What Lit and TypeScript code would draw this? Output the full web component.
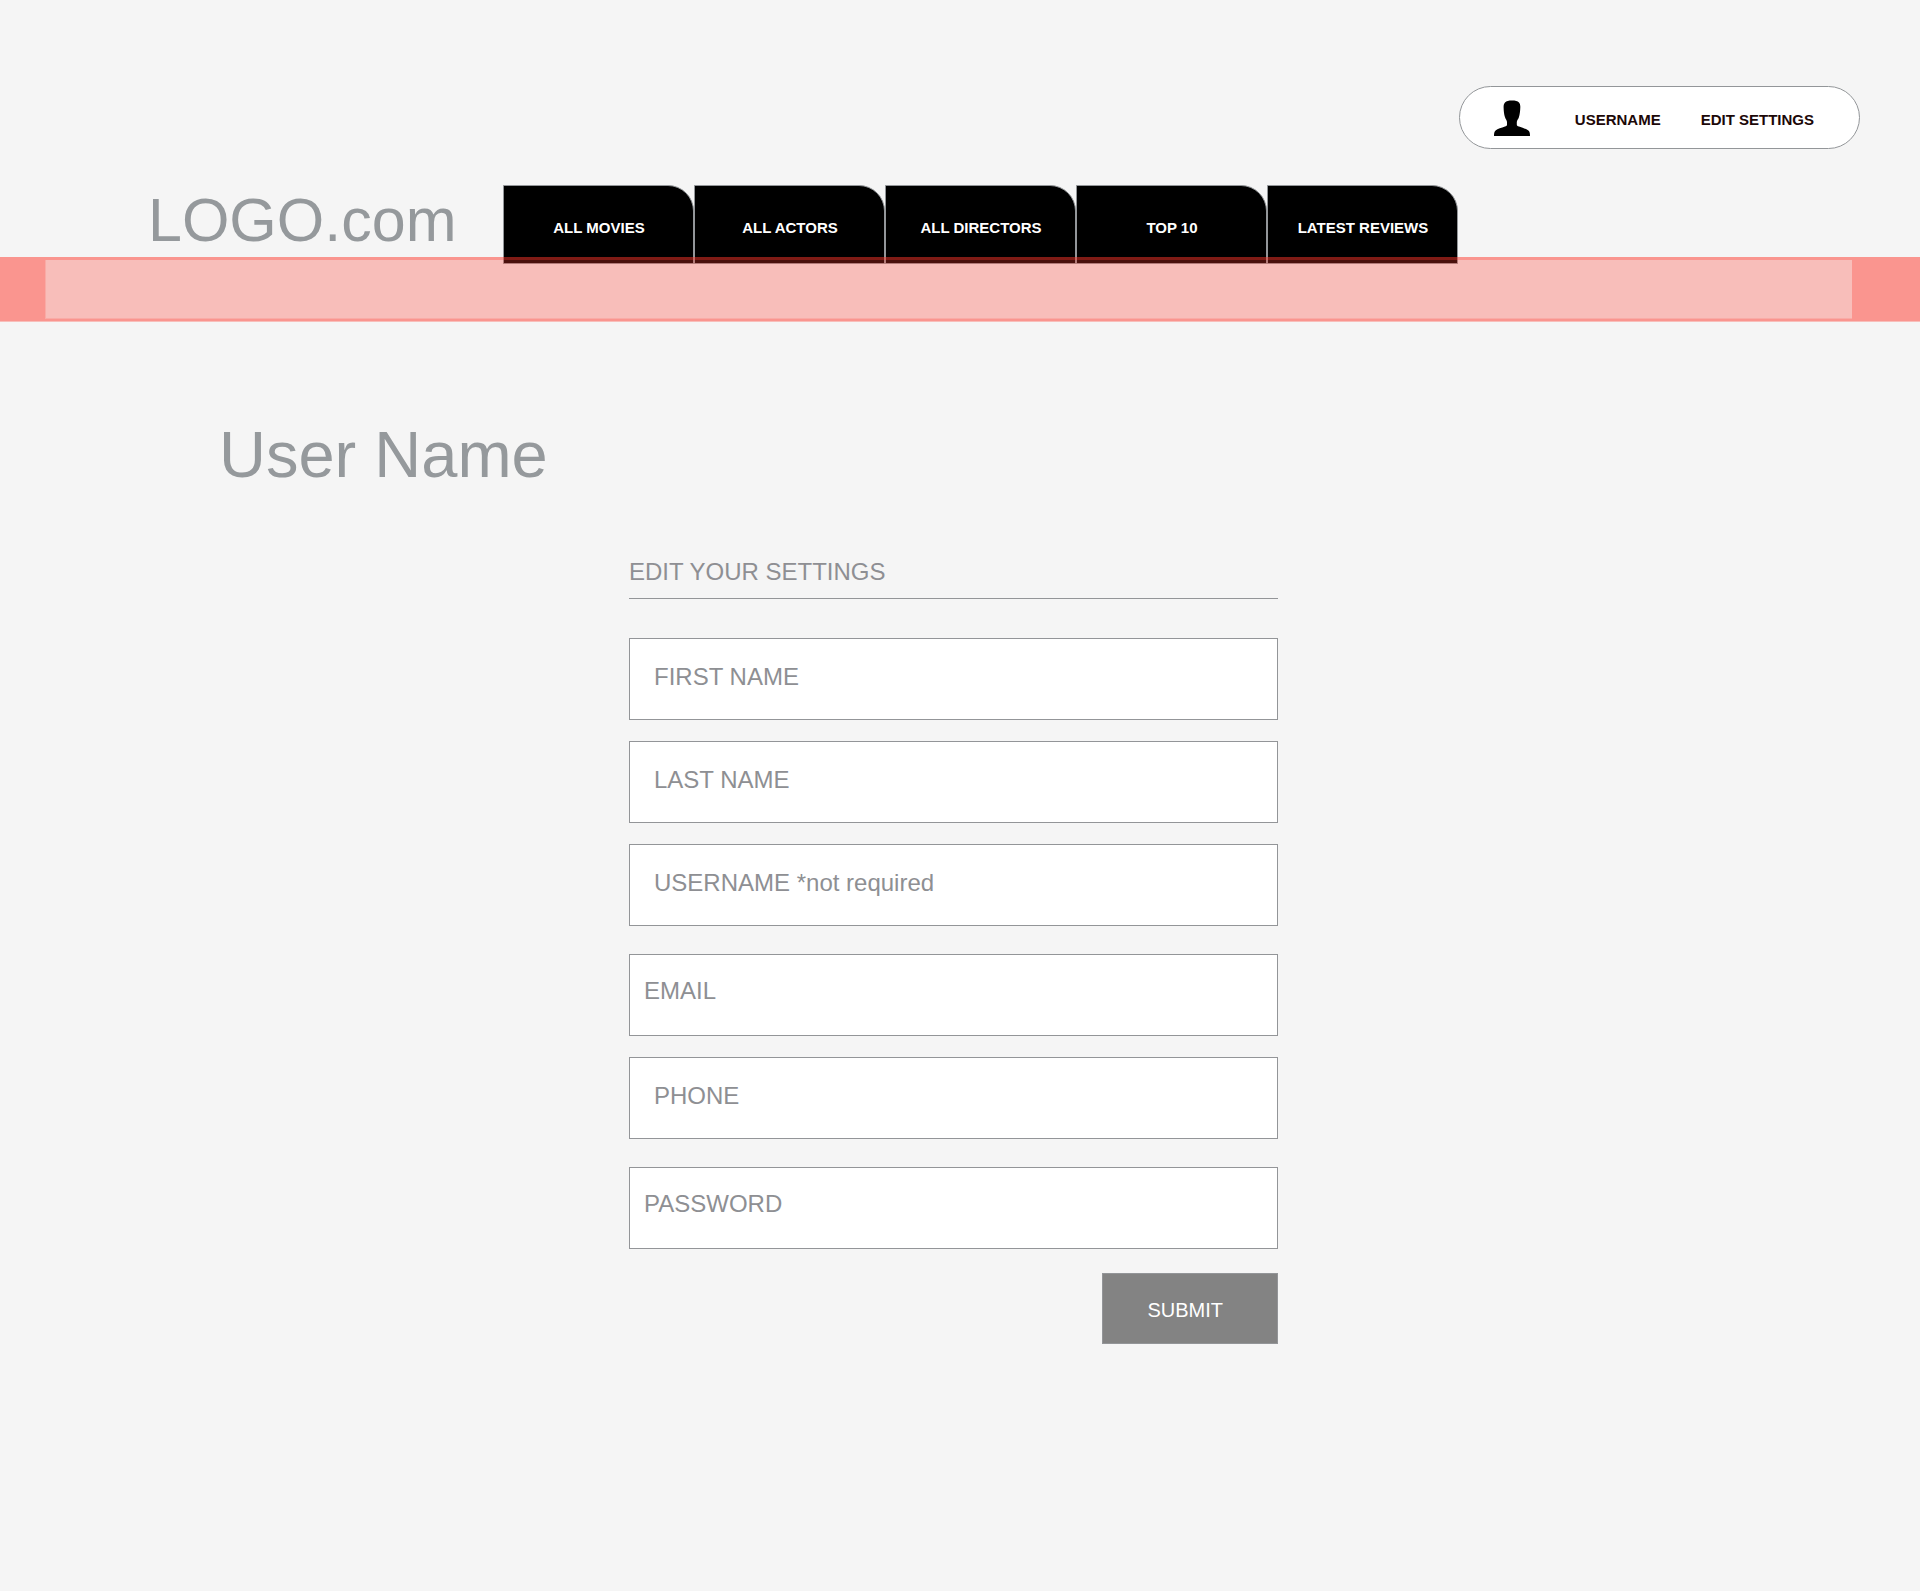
import { LitElement, html, css } from "lit";
import { customElement } from "lit/decorators.js";
import { classMap } from "lit/directives/class-map.js";

interface Field {
  name: string;
  label: string;
  type: string;
  tight?: boolean;
}

const TABS = ["ALL MOVIES", "ALL ACTORS", "ALL DIRECTORS", "TOP 10", "LATEST REVIEWS"];

const FIELD_GROUPS: Field[][] = [
  [
    { name: "first-name", label: "FIRST NAME", type: "text" },
    { name: "last-name", label: "LAST NAME", type: "text" },
    { name: "username", label: "USERNAME *not required", type: "text" },
  ],
  [
    { name: "email", label: "EMAIL", type: "email", tight: true },
    { name: "phone", label: "PHONE", type: "tel" },
  ],
  [{ name: "password", label: "PASSWORD", type: "password", tight: true }],
];

@customElement("site-header")
class SiteHeader extends LitElement {
  static styles = css`
    :host {
      display: block;
    }
    .header {
      display: flex;
      flex-direction: column;
      padding-top: 86px;
    }
    .account {
      align-self: flex-end;
      display: flex;
      align-items: center;
      box-sizing: border-box;
      height: 63px;
      margin-right: 60px;
      padding: 0 45px 0 34px;
      border: 1px solid #939699;
      border-radius: 32px;
      background: #fff;
      font-size: 15px;
      font-weight: bold;
      line-height: 18px;
    }
    .avatar {
      width: 36px;
      height: 36px;
      margin-right: 45px;
    }
    .account-link {
      padding-top: 4px;
      color: #1c0808;
      text-decoration: none;
    }
    .account-link + .account-link {
      margin-left: 40px;
    }
    .top-row {
      display: flex;
      align-items: flex-end;
      gap: 47px;
      margin-top: 36px;
      padding-left: 148px;
    }
    .logo {
      margin-bottom: 14px;
      color: #95999c;
      font-size: 61px;
      line-height: 60px;
      text-decoration: none;
    }
    .tabs {
      display: flex;
      flex: 0 1 955px;
    }
    .tab {
      flex: 1 1 0;
      padding: 33px 0 26px;
      border: 1px solid #939699;
      border-top-right-radius: 26px;
      background: #000;
      color: #fff;
      font-size: 15px;
      font-weight: bold;
      line-height: 18px;
      text-align: center;
      text-decoration: none;
      white-space: nowrap;
    }
    .band {
      position: relative;
      margin-top: -7px;
      border-bottom: 1px solid rgba(255, 54, 42, 0.29);
    }
    .band-frame {
      border: solid rgba(255, 54, 42, 0.5);
      border-width: 3px 68px 2px 45px;
    }
    .band-core {
      height: 58px;
      border: solid rgba(255, 54, 42, 0.39);
      border-width: 0 0 1px 1px;
      background: rgba(255, 54, 42, 0.29);
      background-clip: padding-box;
    }
  `;

  render() {
    return html`
      <header class="header">
        <div class="account">
          <svg class="avatar" viewBox="0 0 36 36" aria-hidden="true">
            <path
              d="M18 .4C14.6 .4 12.4 .9 11 2.4C9.8 3.8 9.5 5.6 9.6 7.6C9.7 11 10 14.4 11 17.2C11.7 19.2 13 20.6 13 22V24.4C13 25.6 12.2 26.2 11 26.6C7.5 27.8 3.6 29 1.6 30.6C.2 31.8 0 33.6 0 36H36C36 33.6 35.8 31.8 34.4 30.6C32.4 29 28.5 27.8 25 26.6C23.4 26 22.8 25.6 22.8 24.4V22C22.8 20.6 24.2 19.2 24.9 17.2C25.8 14.4 26.2 11 26.3 7.6C26.4 5.6 26.2 3.8 25 2.4C23.6 .9 21.4 .4 18 .4Z"
            />
          </svg>
          <a class="account-link" href="#username">USERNAME</a>
          <a class="account-link" href="#settings">EDIT SETTINGS</a>
        </div>
        <div class="top-row">
          <a class="logo" href="#home">LOGO.com</a>
          <nav class="tabs">
            ${TABS.map((tab) => html`<a class="tab" href="#tab">${tab}</a>`)}
          </nav>
        </div>
        <div class="band">
          <div class="band-frame"><div class="band-core"></div></div>
        </div>
      </header>
    `;
  }
}

@customElement("settings-form")
class SettingsForm extends LitElement {
  static styles = css`
    :host {
      display: block;
    }
    .form {
      box-sizing: border-box;
      width: 100%;
      max-width: 649px;
      margin: 0 auto;
      display: flex;
      flex-direction: column;
    }
    .heading {
      margin: 0 0 39px;
      padding-bottom: 12px;
      border-bottom: 1px solid #939598;
      color: #8e8f93;
      font-size: 24px;
      font-weight: normal;
      line-height: 28px;
    }
    .groups {
      display: flex;
      flex-direction: column;
      gap: 28px;
    }
    .group {
      display: flex;
      flex-direction: column;
      gap: 21px;
    }
    .field {
      box-sizing: border-box;
      width: 100%;
      height: 82px;
      margin: 0;
      padding: 24px 24px 28px;
      border: 1px solid #939598;
      border-radius: 0;
      background: #fff;
      color: #8e8f93;
      font-family: inherit;
      font-size: 24px;
      line-height: 28px;
    }
    .field.tight {
      padding: 22px 14px 30px;
    }
    .field::placeholder {
      color: #8e8f93;
      opacity: 1;
    }
    .submit {
      align-self: flex-end;
      margin: 24px 0 0;
      padding: 24px 54px 21px 44px;
      border: 1px solid #939598;
      border-radius: 0;
      background: #838383;
      color: #fff;
      font-family: inherit;
      font-size: 20px;
      line-height: 24px;
    }
  `;

  render() {
    return html`
      <form class="form">
        <h2 class="heading">EDIT YOUR SETTINGS</h2>
        <div class="groups">
          ${FIELD_GROUPS.map(
            (group) => html`<div class="group">
              ${group.map(
                (field) => html`<input
                  class=${classMap({ field: true, tight: !!field.tight })}
                  type=${field.type}
                  name=${field.name}
                  aria-label=${field.label}
                  placeholder=${field.label}
                />`
              )}
            </div>`
          )}
        </div>
        <button class="submit" type="button">SUBMIT</button>
      </form>
    `;
  }
}

@customElement("app-root")
class AppRoot extends LitElement {
  static styles = css`
    :host {
      display: block;
      min-height: 100vh;
      background: #f5f5f5;
      font-family: "Liberation Sans", Helvetica, Arial, sans-serif;
    }
    .title {
      margin: 0;
      padding: 97px 60px 67px 219px;
      color: #95999c;
      font-size: 65px;
      font-weight: normal;
      line-height: 72px;
    }
    .content {
      padding: 0 60px 60px 47px;
    }
  `;

  render() {
    return html`
      <site-header></site-header>
      <main>
        <h1 class="title">User Name</h1>
        <div class="content"><settings-form></settings-form></div>
      </main>
    `;
  }
}
